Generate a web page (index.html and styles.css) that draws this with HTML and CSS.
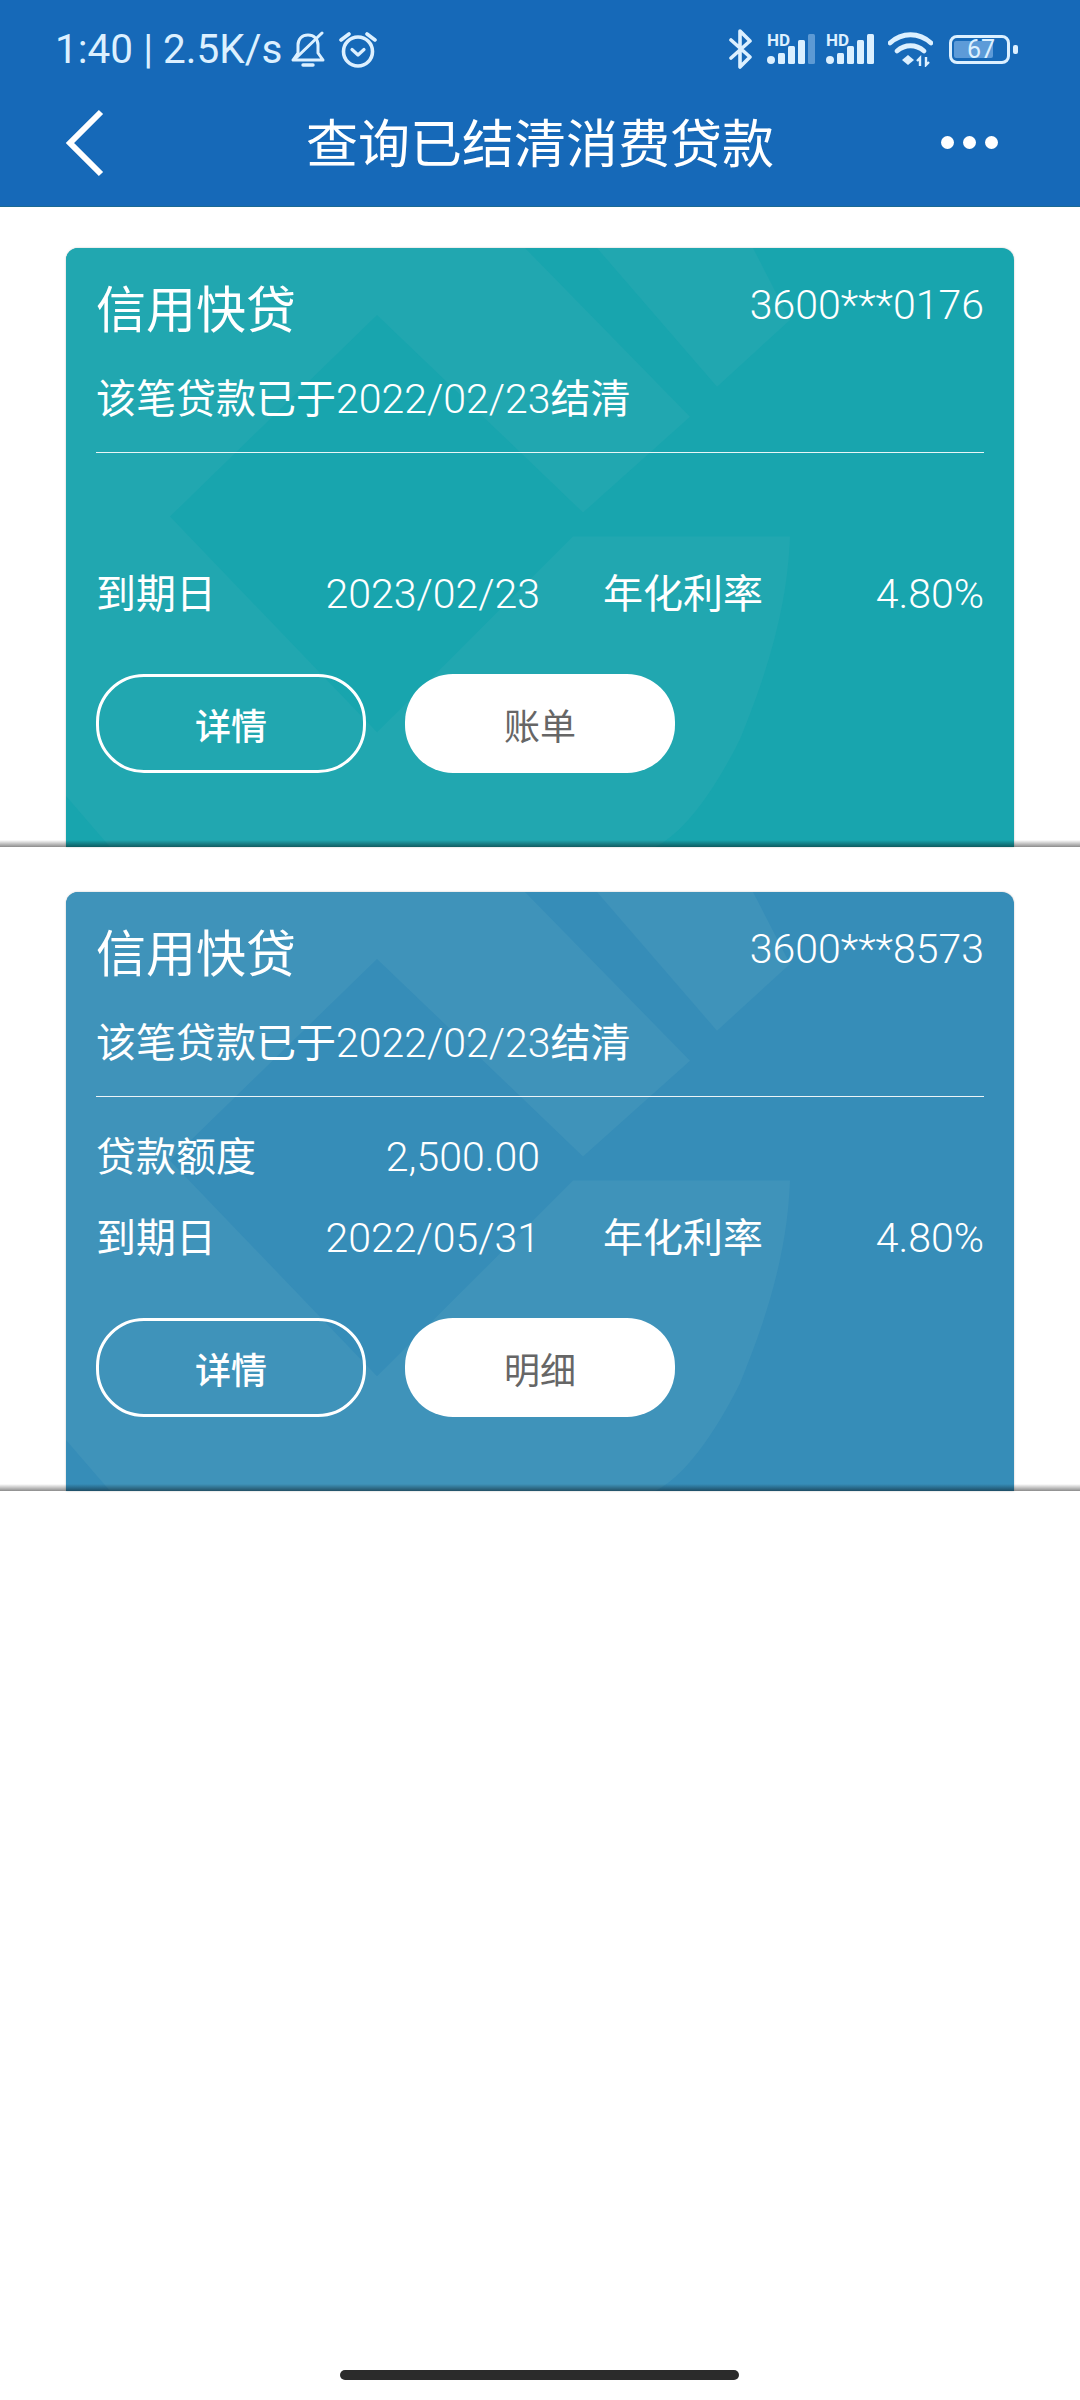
FILE: index.html
```html
<!DOCTYPE html>
<html lang="zh-CN">
<head>
  <meta charset="UTF-8">
  <title>查询已结清消费贷款</title>
  <link rel="stylesheet" href="styles.css">
</head>
<body>
  <svg class="defs" width="0" height="0">
    <symbol id="card_pattern" viewBox="0 0 948 600" preserveAspectRatio="none">
      <path d="M0 0H459L624 169 517 265 311 67 104 269 311 485 507 289H724C722 340 712 400 674 492 640 560 610 590 589 600H44L0 549Z"/>
      <path d="M531 0H687L724 72 651 139Z"/>
    </symbol>
  </svg>

  <div class="page">
    <header class="top_bar">
      <div class="status_bar">
        <div class="status_left">
          <span class="status_text">1:40 | 2.5K/s</span>
          <svg class="icon_bell" viewBox="0 0 34 37">
            <path d="M2 29H32L27 22V14C27 8 23 4 17 4S7 8 7 14V22Z" fill="none" stroke="currentColor" stroke-width="3" stroke-linejoin="round"/>
            <path d="M12 34H22" stroke="currentColor" stroke-width="3.400" stroke-linecap="round"/>
            <path d="M31 2 4 28" stroke="currentColor" stroke-width="3" stroke-linecap="round"/>
          </svg>
          <svg class="icon_alarm" viewBox="0 0 38 37">
            <circle cx="19" cy="20.500" r="14.500" fill="none" stroke="currentColor" stroke-width="3.600"/>
            <path d="M13 18.500 19 24 25 18.500" fill="none" stroke="currentColor" stroke-width="3.200" stroke-linecap="round" stroke-linejoin="round"/>
            <path d="M2 9 10 3M36 9 28 3" stroke="currentColor" stroke-width="3.600" stroke-linecap="round"/>
          </svg>
        </div>
        <div class="status_right">
          <svg class="icon_bt" viewBox="0 0 25 40">
            <path d="M3 11 22 28 12 38V2L22 12 3 29" fill="none" stroke="currentColor" stroke-width="3.600" stroke-linejoin="round" stroke-linecap="round"/>
          </svg>
          <div class="signal">
            <span class="hd">HD</span>
            <svg class="bars" viewBox="0 0 48 33">
              <circle cx="4" cy="27" r="4"/>
              <rect x="11" y="20" width="7" height="11" rx="1.500"/>
              <rect x="21" y="13" width="7" height="18" rx="1.500"/>
              <rect x="31" y="7" width="7" height="24" rx="1.500"/>
              <rect x="41" y="1" width="7" height="30" rx="1.500" class="bar_off"/>
            </svg>
          </div>
          <div class="signal">
            <span class="hd">HD</span>
            <svg class="bars" viewBox="0 0 48 33">
              <circle cx="4" cy="27" r="4"/>
              <rect x="11" y="20" width="7" height="11" rx="1.500"/>
              <rect x="21" y="13" width="7" height="18" rx="1.500"/>
              <rect x="31" y="7" width="7" height="24" rx="1.500"/>
              <rect x="41" y="1" width="7" height="30" rx="1.500"/>
            </svg>
          </div>
          <svg class="icon_wifi" viewBox="0 0 45 36">
            <path d="M2 12C14 1 31 1 43 12" fill="none" stroke="currentColor" stroke-width="4.800" stroke-linecap="round"/>
            <path d="M9 20C17 13 28 13 36 20" fill="none" stroke="currentColor" stroke-width="4.800" stroke-linecap="round"/>
            <path d="M20 24 26 29 20 34 14 29Z" fill="currentColor"/>
            <path d="M32 35V27L29 30M38 26V34L41 31" fill="none" stroke="currentColor" stroke-width="2.400"/>
          </svg>
          <div class="battery">
            <div class="battery_body">
              <div class="battery_fill" style="width: 76%"></div>
              <span class="battery_num">67</span>
            </div>
            <div class="battery_nub"></div>
          </div>
        </div>
      </div>
      <div class="title_bar">
        <svg class="icon_back" viewBox="0 0 44 72">
          <path d="M37 5 6 36 37 67" fill="none" stroke="#fff" stroke-width="6"/>
        </svg>
        <h1>查询已结清消费贷款</h1>
        <div class="more_dots"><i></i><i></i><i></i></div>
      </div>
    </header>

    <main class="loan_list">
      <div class="loan_item">
        <div class="loan_card teal_card">
          <svg class="card_bg"><use href="#card_pattern"/></svg>
          <div class="card_head">
            <span class="card_name">信用快贷</span>
            <span class="card_no num">3600***0176</span>
          </div>
          <div class="card_note">该笔贷款已于<span class="num">2022/02/23</span>结清</div>
          <div class="card_rows">
            <div class="card_row"></div>
            <div class="card_row">
              <div class="cell"><span>到期日</span><span class="num">2023/02/23</span></div>
              <div class="cell"><span>年化利率</span><span class="num">4.80%</span></div>
            </div>
          </div>
          <div class="card_btns">
            <button type="button" class="line_btn">详情</button>
            <button type="button" class="white_btn">账单</button>
          </div>
        </div>
      </div>

      <div class="loan_item">
        <div class="loan_card blue_card">
          <svg class="card_bg"><use href="#card_pattern"/></svg>
          <div class="card_head">
            <span class="card_name">信用快贷</span>
            <span class="card_no num">3600***8573</span>
          </div>
          <div class="card_note">该笔贷款已于<span class="num">2022/02/23</span>结清</div>
          <div class="card_rows">
            <div class="card_row">
              <div class="cell"><span>贷款额度</span><span class="num">2,500.00</span></div>
            </div>
            <div class="card_row">
              <div class="cell"><span>到期日</span><span class="num">2022/05/31</span></div>
              <div class="cell"><span>年化利率</span><span class="num">4.80%</span></div>
            </div>
          </div>
          <div class="card_btns">
            <button type="button" class="line_btn">详情</button>
            <button type="button" class="white_btn">明细</button>
          </div>
        </div>
      </div>
    </main>

    <div class="home_area"><div class="home_bar"></div></div>
  </div>
</body>
</html>
```

FILE: styles.css
```css
* {
	box-sizing: border-box;
}

body {
	margin: 0;
	background-color: white;
	font-family: Roboto, "Noto Sans CJK SC", sans-serif;
}

.defs {
	position: absolute;
}

.page {
	width: 1080px;
	min-height: 2400px;
	display: flex;
	flex-direction: column;
}

.top_bar {
	height: 207px;
	background-color: #1669b8;
	border-bottom: 1px solid #1b6a93;
	color: #dcf0ff;
}

.status_bar {
	height: 86px;
	padding: 12px 62px 0 55px;
	display: flex;
	align-items: center;
	justify-content: space-between;
}

.status_left,
.status_right {
	display: flex;
	align-items: center;
}

.status_text {
	font-size: 40.5px;
	margin-right: 9px;
}

.icon_bell {
	width: 34px;
	height: 37px;
	margin-right: 14px;
}

.icon_alarm {
	width: 38px;
	height: 37px;
}

.icon_bt {
	width: 25px;
	height: 40px;
	margin-right: 14px;
}

.signal {
	position: relative;
	width: 48px;
	height: 33px;
	margin-right: 11px;
}

.signal + .icon_wifi {
	margin-left: 3px;
}

.hd {
	position: absolute;
	left: 0;
	top: 0;
	font-size: 17px;
	font-weight: 700;
	line-height: 14px;
}

.bars {
	display: block;
	width: 48px;
	height: 33px;
	fill: currentColor;
}

.bar_off {
	fill: #5d9ad4;
}

.icon_wifi {
	width: 45px;
	height: 36px;
	margin-right: 16px;
}

.battery {
	display: flex;
	align-items: center;
}

.battery_body {
	position: relative;
	width: 61px;
	height: 29px;
	padding: 3px 2px;
	border: 3px solid currentColor;
	border-radius: 8px;
}

.battery_fill {
	height: 100%;
	background-color: #5d9bd8;
	border-radius: 2px;
}

.battery_num {
	position: absolute;
	left: 15px;
	top: 0;
	font-size: 25px;
	line-height: 23px;
}

.battery_nub {
	width: 5px;
	height: 9px;
	margin-left: 3px;
	background-color: currentColor;
	border-radius: 2px;
}

.title_bar {
	position: relative;
	height: 120px;
	display: flex;
	align-items: center;
	justify-content: center;
}

.title_bar h1 {
	margin: 0;
	font-size: 52px;
	font-weight: 400;
	color: white;
	line-height: 1;
}

.icon_back {
	position: absolute;
	left: 64px;
	top: 21px;
	width: 44px;
	height: 72px;
}

.more_dots {
	position: absolute;
	left: 941px;
	top: 50px;
	display: flex;
	gap: 9px;
}

.more_dots i {
	width: 13px;
	height: 13px;
	border-radius: 50%;
	background-color: white;
}

.loan_list {
	flex: 1;
	padding-top: 41px;
	display: flex;
	flex-direction: column;
	gap: 45px;
}

.loan_item {
	position: relative;
	padding: 0 66px;
}

.loan_item::after {
	content: "";
	position: absolute;
	left: 0;
	right: 0;
	bottom: 0;
	height: 7px;
	background: linear-gradient(rgba(0, 0, 0, 0), rgba(0, 0, 0, 0.45));
}

.loan_card {
	position: relative;
	height: 599px;
	padding: 0 30px;
	border-radius: 12px 12px 0 0;
	box-shadow: 0 0 2px rgba(0, 0, 0, 0.25);
	color: white;
	overflow: hidden;
}

.teal_card {
	background-color: #18a5ae;
	fill: #21a7b0;
}

.blue_card {
	background-color: #368db8;
	fill: #3f93ba;
}

.card_bg {
	position: absolute;
	left: 0;
	top: 0;
	width: 100%;
	height: 100%;
}

.card_head,
.card_note,
.card_rows,
.card_btns {
	position: relative;
}

.card_head {
	height: 115px;
	display: flex;
	justify-content: space-between;
	align-items: center;
}

.card_name {
	font-size: 50px;
}

.num {
	font-size: 41px;
	font-weight: 300;
}

.card_no {
	position: relative;
	top: -1px;
}

.card_note {
	height: 90px;
	border-bottom: 1px solid rgba(255, 255, 255, 0.9);
	font-size: 40px;
	line-height: 72px;
	margin-bottom: 16px;
}

.card_rows {
	display: flex;
	flex-direction: column;
}

.card_row {
	height: 81px;
	display: grid;
	grid-template-columns: 444px 1fr;
	column-gap: 63px;
	align-items: center;
	font-size: 40px;
}

.cell {
	display: flex;
	justify-content: space-between;
	align-items: baseline;
}

.card_btns {
	margin-top: 43px;
	display: flex;
	gap: 39px;
}

.line_btn,
.white_btn {
	width: 270px;
	height: 99px;
	border-radius: 48px;
	font-family: inherit;
	font-size: 36px;
	padding: 0;
}

.line_btn {
	background-color: transparent;
	border: 3px solid white;
	color: white;
	font-weight: 500;
}

.white_btn {
	background-color: white;
	border: none;
	color: #666;
}

.home_area {
	height: 72px;
	padding: 42px 0 0 340px;
}

.home_bar {
	width: 399px;
	height: 10px;
	background-color: #2b2b2b;
	border-radius: 5px;
}
```
